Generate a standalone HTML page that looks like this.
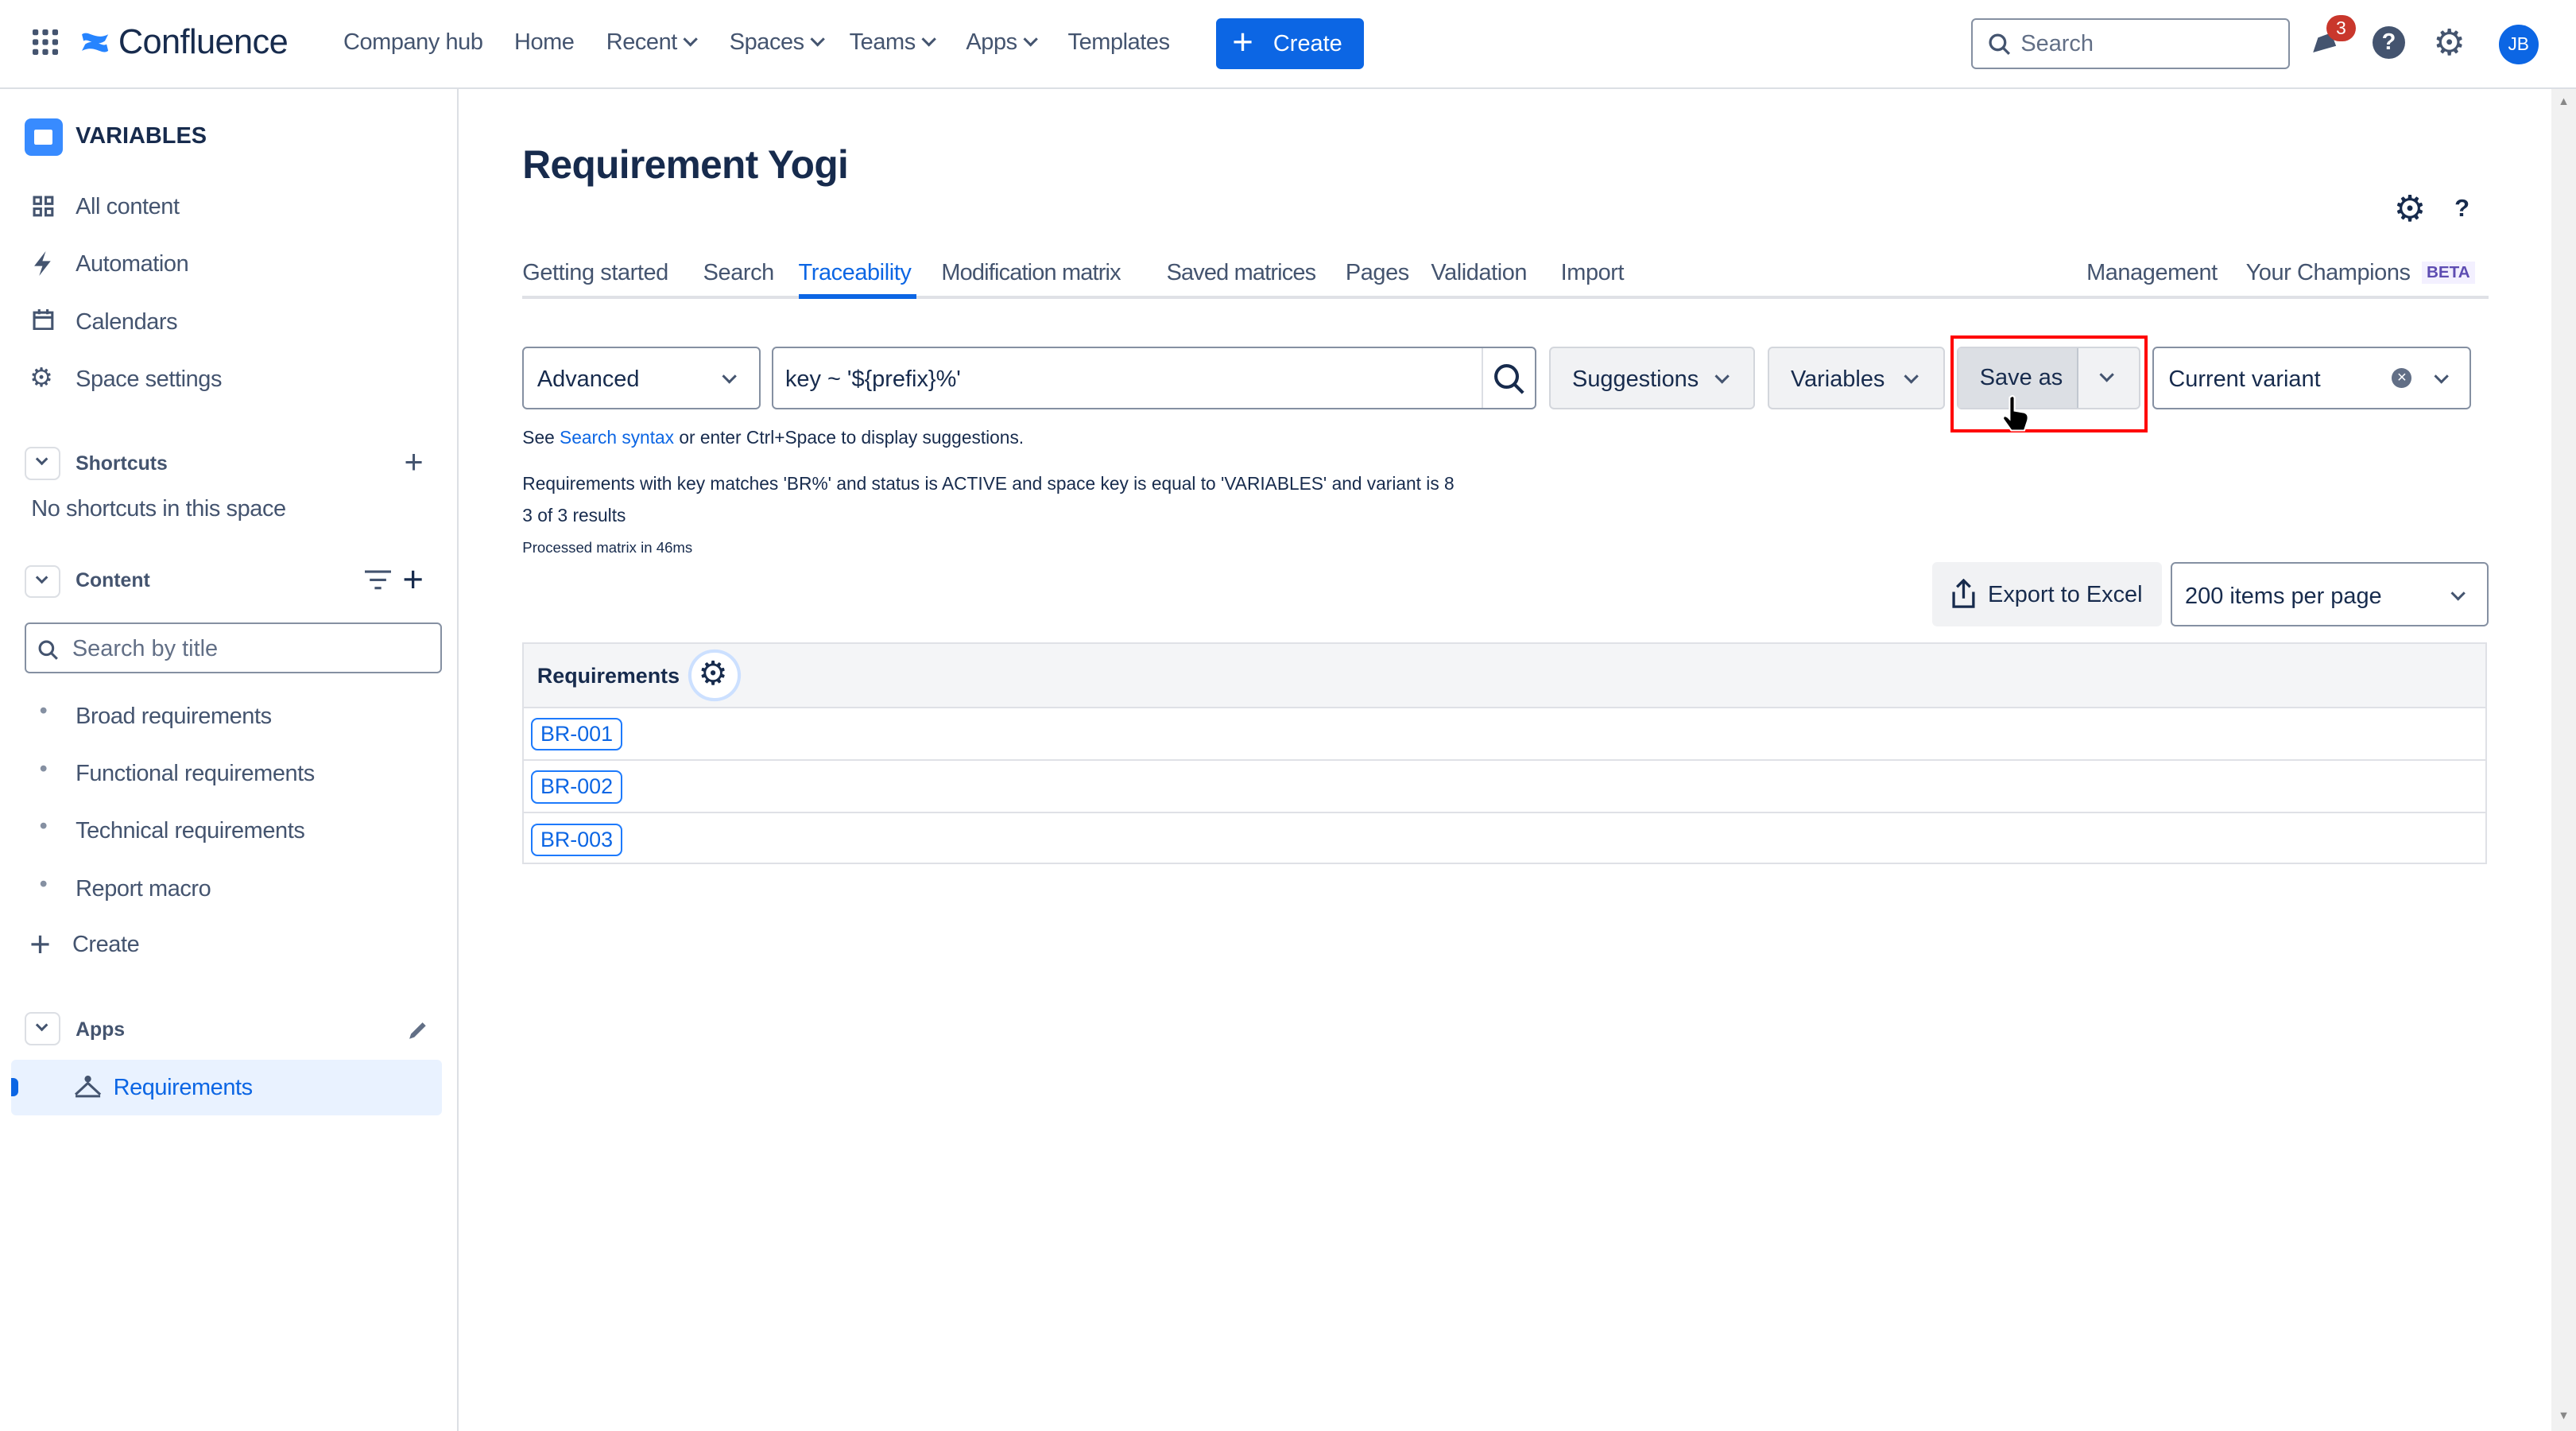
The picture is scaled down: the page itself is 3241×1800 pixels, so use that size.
<!DOCTYPE html>
<html><head><meta charset="utf-8"><style>
html,body{margin:0;padding:0;background:#fff;overflow:hidden}
body{width:1568px;height:871px;zoom:2.067;position:relative;font-family:"Liberation Sans",sans-serif;color:#172b4d;font-size:14px}
.a{position:absolute;white-space:nowrap}
.nav{color:#44546f;font-size:14px;letter-spacing:-0.2px}
.side{color:#44546f;font-size:14px;letter-spacing:-0.2px}
.chev{display:inline-block;width:5px;height:5px;border-right:1.6px solid #44546f;border-bottom:1.6px solid #44546f;transform:rotate(45deg);margin-left:5px;position:relative;top:-3px}
.a.chev{position:absolute;margin-left:0}
.btn{position:absolute;background:#f1f2f4;border:1px solid #d3d6dc;border-radius:3px;box-sizing:border-box;font-size:14px;color:#172b4d}
.inp{position:absolute;border:1px solid #8590a2;border-radius:3px;box-sizing:border-box;background:#fff}
.tag{position:absolute;left:323px;border:1px solid #1d7afc;border-radius:4px;color:#0c66e4;font-size:13px;padding:1px 5px;line-height:16px}
.sq{position:absolute;left:15px;width:22px;height:20px;border:1px solid #dcdfe4;border-radius:4px;box-sizing:border-box}
.sq:after{content:"";position:absolute;left:7px;top:4px;width:4px;height:4px;border-right:1.5px solid #44546f;border-bottom:1.5px solid #44546f;transform:rotate(45deg)}
</style></head><body>
<div class="a" style="left:0;top:53px;width:1568px;height:1px;background:#dcdfe4"></div>
<svg class="a" style="left:20px;top:18px" width="16" height="16"><g fill="#44546f"><rect x="0" y="0" width="3.5" height="3.5" rx="1"/><rect x="6" y="0" width="3.5" height="3.5" rx="1"/><rect x="12" y="0" width="3.5" height="3.5" rx="1"/><rect x="0" y="6" width="3.5" height="3.5" rx="1"/><rect x="6" y="6" width="3.5" height="3.5" rx="1"/><rect x="12" y="6" width="3.5" height="3.5" rx="1"/><rect x="0" y="12" width="3.5" height="3.5" rx="1"/><rect x="6" y="12" width="3.5" height="3.5" rx="1"/><rect x="12" y="12" width="3.5" height="3.5" rx="1"/></g></svg>
<svg class="a" style="left:49px;top:17px" width="18" height="18" viewBox="0 0 18 18"><path d="M1 4 C5 1 9 8 17 4 L15 8 C9 12 5 6 2 8Z M17 14 C13 17 9 10 1 14 L3 10 C9 6 13 12 16 10Z" fill="#2684ff"/></svg>
<div class="a" style="left:72px;top:14px;font-size:21px;color:#172b4d;letter-spacing:-0.3px">Confluence</div>
<div class="a nav" style="left:209px;top:18px">Company hub</div>
<div class="a nav" style="left:313px;top:18px">Home</div>
<div class="a nav" style="left:369px;top:18px">Recent<span class="chev"></span></div>
<div class="a nav" style="left:444px;top:18px">Spaces<span class="chev"></span></div>
<div class="a nav" style="left:517px;top:18px">Teams<span class="chev"></span></div>
<div class="a nav" style="left:588px;top:18px">Apps<span class="chev"></span></div>
<div class="a nav" style="left:650px;top:18px">Templates</div>
<div class="a" style="left:740px;top:11px;width:90px;height:31px;background:#0c66e4;border-radius:3px;color:#fff;font-size:14px;line-height:31px"><span style="position:absolute;left:10px;top:-1px;font-size:22px">+</span><span style="position:absolute;left:35px">Create</span></div>
<div class="inp" style="left:1200px;top:11px;width:194px;height:31px"><svg class="a" style="left:9px;top:8px" width="14" height="14"><circle cx="6" cy="6" r="4.5" fill="none" stroke="#44546f" stroke-width="1.6"/><path d="M9.5 9.5 13 13" stroke="#44546f" stroke-width="1.6"/></svg><span class="a" style="left:29px;top:7px;color:#626f86">Search</span></div>
<svg class="a" style="left:1405px;top:17px" width="20" height="20"><path d="M3 15 L6 6 L14 3 L17 11 Z" fill="#44546f"/></svg>
<div class="a" style="left:1416px;top:9px;width:18px;height:16px;background:#c9372c;border-radius:8px;color:#fff;font-size:11px;text-align:center;line-height:16px">3</div>
<div class="a" style="left:1444px;top:16px;width:20px;height:20px;border-radius:50%;background:#44546f;color:#fff;font-size:14px;font-weight:bold;text-align:center;line-height:20px">?</div>
<div class="a" style="left:1481px;top:13px;font-size:22px;color:#44546f">⚙</div>
<div class="a" style="left:1521px;top:15px;width:24px;height:24px;border-radius:50%;background:#0c66e4;color:#fff;font-size:11px;text-align:center;line-height:24px">JB</div>
<div class="a" style="left:278px;top:54px;width:1px;height:817px;background:#dcdfe4"></div>
<div class="a" style="left:15px;top:72px;width:23px;height:23px;border-radius:4px;background:#388bff"><div style="position:absolute;left:6px;top:7px;width:11px;height:9px;background:#fff;border-radius:1px"></div></div>
<div class="a" style="left:46px;top:75px;font-weight:bold;font-size:14px">VARIABLES</div>
<svg class="a" style="left:20px;top:119px" width="13" height="13"><g fill="none" stroke="#44546f" stroke-width="1.5"><rect x="1" y="1" width="4" height="4"/><rect x="8" y="1" width="4" height="4"/><rect x="1" y="8" width="4" height="4"/><rect x="8" y="8" width="4" height="4"/></g></svg>
<div class="a side" style="left:46px;top:118px">All content</div>
<svg class="a" style="left:20px;top:153px" width="12" height="15"><path d="M8 0 L1 9 H6 L4 15 L11 6 H6 Z" fill="#44546f"/></svg>
<div class="a side" style="left:46px;top:153px">Automation</div>
<svg class="a" style="left:20px;top:188px" width="13" height="13"><rect x="1" y="2" width="11" height="10" fill="none" stroke="#44546f" stroke-width="1.5"/><path d="M1 5h11M4 0v3M9 0v3" stroke="#44546f" stroke-width="1.5"/></svg>
<div class="a side" style="left:46px;top:188px">Calendars</div>
<div class="a" style="left:18px;top:220px;color:#44546f;font-size:16px">⚙</div>
<div class="a side" style="left:46px;top:223px">Space settings</div>
<div class="sq" style="top:272px"></div>
<div class="a" style="left:46px;top:276px;font-weight:bold;font-size:12px;color:#44546f">Shortcuts</div>
<div class="a" style="left:246px;top:270px;font-size:20px;color:#44546f">+</div>
<div class="a side" style="left:19px;top:302px">No shortcuts in this space</div>
<div class="sq" style="top:344px"></div>
<div class="a" style="left:46px;top:347px;font-weight:bold;font-size:12px;color:#44546f">Content</div>
<svg class="a" style="left:222px;top:347px" width="16" height="12"><path d="M0 1h16M3 6h10M6 11h4" stroke="#44546f" stroke-width="1.5"/></svg>
<div class="a" style="left:245px;top:340px;font-size:22px;color:#172b4d">+</div>
<div class="inp" style="left:15px;top:379px;width:254px;height:31px"><svg class="a" style="left:7px;top:9px" width="13" height="13"><circle cx="5.5" cy="5.5" r="4" fill="none" stroke="#44546f" stroke-width="1.5"/><path d="M8.5 8.5 12 12" stroke="#44546f" stroke-width="1.5"/></svg><span class="a" style="left:28px;top:7px;color:#626f86">Search by title</span></div>
<div class="a" style="left:24px;top:425px;color:#8590a2">•</div><div class="a side" style="left:46px;top:428px">Broad requirements</div>
<div class="a" style="left:24px;top:460px;color:#8590a2">•</div><div class="a side" style="left:46px;top:463px">Functional requirements</div>
<div class="a" style="left:24px;top:495px;color:#8590a2">•</div><div class="a side" style="left:46px;top:498px">Technical requirements</div>
<div class="a" style="left:24px;top:530px;color:#8590a2">•</div><div class="a side" style="left:46px;top:533px">Report macro</div>
<div class="a" style="left:18px;top:562px;font-size:22px;color:#44546f">+</div><div class="a side" style="left:44px;top:567px">Create</div>
<div class="sq" style="top:616px"></div>
<div class="a" style="left:46px;top:620px;font-weight:bold;font-size:12px;color:#44546f">Apps</div>
<svg class="a" style="left:248px;top:621px" width="12" height="12"><path d="M1 11 L2 8 L9 1 L11 3 L4 10 Z" fill="#626f86"/></svg>
<div class="a" style="left:7px;top:645px;width:262px;height:34px;background:#e9f2ff;border-radius:3px"></div>
<div class="a" style="left:7px;top:656px;width:4px;height:11px;background:#0c66e4;border-radius:0 3px 3px 0"></div>
<svg class="a" style="left:45px;top:654px" width="17" height="14"><circle cx="8.5" cy="2.5" r="2" fill="#44546f"/><path d="M1 12 L8.5 5 L16 12" fill="none" stroke="#44546f" stroke-width="1.5"/><path d="M1 13h15" stroke="#44546f" stroke-width="1.5"/></svg>
<div class="a" style="left:69px;top:654px;color:#0c66e4;letter-spacing:-0.2px">Requirements</div>
<div class="a" style="left:1553px;top:54px;width:15px;height:817px;background:#f1f1f1"></div>
<div class="a" style="left:1557px;top:58px;font-size:7px;color:#888">▲</div>
<div class="a" style="left:1557px;top:858px;font-size:7px;color:#888">▼</div>
<div class="a" style="left:318px;top:86px;font-size:24px;font-weight:bold;letter-spacing:-0.3px">Requirement Yogi</div>
<div class="a" style="left:1457px;top:114px;font-size:22px">⚙</div>
<div class="a" style="left:1494px;top:118px;font-size:15px;font-weight:bold">?</div>
<div class="a" style="left:318px;top:180px;width:1197px;height:2px;background:#dfe1e6"></div>
<div class="a" style="left:486px;top:179px;width:72px;height:3px;background:#0c66e4"></div>
<div class="a nav" style="left:318px;top:158px">Getting started</div>
<div class="a nav" style="left:428px;top:158px">Search</div>
<div class="a" style="left:486px;top:158px;color:#0c66e4;letter-spacing:-0.2px">Traceability</div>
<div class="a nav" style="left:573px;top:158px;letter-spacing:-0.4px">Modification matrix</div>
<div class="a nav" style="left:710px;top:158px;letter-spacing:-0.4px">Saved matrices</div>
<div class="a nav" style="left:819px;top:158px">Pages</div>
<div class="a nav" style="left:871px;top:158px">Validation</div>
<div class="a nav" style="left:950px;top:158px">Import</div>
<div class="a nav" style="left:1270px;top:158px">Management</div>
<div class="a nav" style="left:1367px;top:158px">Your Champions</div>
<div class="a" style="left:1474px;top:159px;background:#f3f0ff;color:#5e4db2;font-size:10px;font-weight:bold;padding:1px 3px">BETA</div>
<div class="inp" style="left:318px;top:211px;width:145px;height:38px"><span class="a" style="left:8px;top:11px">Advanced</span><span class="chev a" style="left:122px;top:14px"></span></div>
<div class="inp" style="left:470px;top:211px;width:465px;height:38px"><span class="a" style="left:7px;top:11px">key ~ '${prefix}%'</span><div class="a" style="left:431px;top:0;width:1px;height:36px;background:#dcdfe4"></div><svg class="a" style="left:438px;top:9px" width="20" height="20"><circle cx="8" cy="8" r="6.5" fill="none" stroke="#172b4d" stroke-width="2"/><path d="M13 13 18 18" stroke="#172b4d" stroke-width="2"/></svg></div>
<div class="btn" style="left:943px;top:211px;width:125px;height:38px"><span class="a" style="left:13px;top:11px">Suggestions</span><span class="chev a" style="left:101px;top:14px"></span></div>
<div class="btn" style="left:1076px;top:211px;width:108px;height:38px"><span class="a" style="left:13px;top:11px">Variables</span><span class="chev a" style="left:83px;top:14px"></span></div>
<div class="a" style="left:1187px;top:204px;width:120px;height:59px;border:2px solid #f00;box-sizing:border-box"></div>
<div class="btn" style="left:1191px;top:211px;width:112px;height:38px;background:#f1f2f4"></div>
<div class="a" style="left:1192px;top:212px;width:72px;height:36px;background:#dcdfe4;border-right:1px solid #c1c7d0"></div>
<div class="a" style="left:1205px;top:222px">Save as</div>
<span class="chev a" style="left:1279px;top:225px"></span>
<svg class="a" style="left:1217px;top:240px" width="22" height="24"><path d="M6 2 Q8 0 9 2 L9 10 L15 11 Q18 12 17 16 L15 22 L7 22 L2 15 Q2 12 5 14 L6 15 Z" fill="#000" stroke="#fff" stroke-width="1"/></svg>
<div class="inp" style="left:1310px;top:211px;width:194px;height:38px"><span class="a" style="left:9px;top:11px">Current variant</span><div class="a" style="left:145px;top:12px;width:12px;height:12px;border-radius:50%;background:#626f86;color:#fff;font-size:10px;text-align:center;line-height:12px">×</div><span class="chev a" style="left:172px;top:14px"></span></div>
<div class="a" style="left:318px;top:260px;font-size:11px">See <span style="color:#0c66e4">Search syntax</span> or enter Ctrl+Space to display suggestions.</div>
<div class="a" style="left:318px;top:288px;font-size:11px">Requirements with key matches 'BR%' and status is ACTIVE and space key is equal to 'VARIABLES' and variant is 8</div>
<div class="a" style="left:318px;top:307px;font-size:11px">3 of 3 results</div>
<div class="a" style="left:318px;top:328px;font-size:9px">Processed matrix in 46ms</div>
<div class="btn" style="left:1176px;top:342px;width:140px;height:39px;border:none"><svg class="a" style="left:12px;top:10px" width="14" height="18"><path d="M7 1v11M3 5l4-4 4 4M1 8v9h12V8" fill="none" stroke="#172b4d" stroke-width="1.6"/></svg><span class="a" style="left:34px;top:12px">Export to Excel</span></div>
<div class="inp" style="left:1321px;top:342px;width:194px;height:39px"><span class="a" style="left:8px;top:12px">200 items per page</span><span class="chev a" style="left:171px;top:15px"></span></div>
<div class="a" style="left:318px;top:391px;width:1196px;height:135px;border:1px solid #dfe1e6;box-sizing:border-box"></div>
<div class="a" style="left:319px;top:392px;width:1194px;height:38px;background:#f4f5f7;border-bottom:1px solid #dfe1e6"></div>
<div class="a" style="left:327px;top:404px;font-weight:bold;font-size:13px">Requirements</div>
<div class="a" style="left:421px;top:397px;width:28px;height:28px;border-radius:50%;background:#fff;box-shadow:0 0 0 2px #cce0ff"></div>
<div class="a" style="left:425px;top:398px;font-size:20px">⚙</div>
<div class="a" style="left:319px;top:462px;width:1194px;height:1px;background:#dfe1e6"></div>
<div class="a" style="left:319px;top:494px;width:1194px;height:1px;background:#dfe1e6"></div>
<div class="tag" style="top:437px">BR-001</div>
<div class="tag" style="top:469px">BR-002</div>
<div class="tag" style="top:501px">BR-003</div>
</body></html>
